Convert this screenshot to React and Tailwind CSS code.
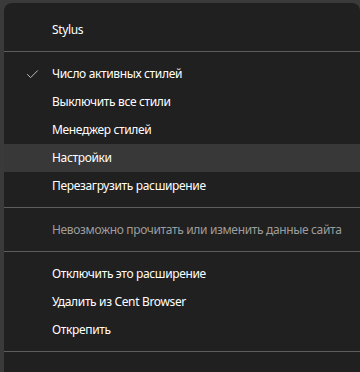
import { Check } from "lucide-react";

const Item = ({ children, active, checked, disabled }) => (
  <div
    className={`flex h-[28px] items-center pl-[48px] text-[12px] tracking-[-0.35px] ${
      active ? "bg-[#383838]" : ""
    } ${disabled ? "text-[#9d9d9d]" : "text-white"}`}
  >
    {checked && (
      <Check className="absolute ml-[-27px] h-[15px] w-[15px] text-[#bdbdbd]" strokeWidth={1.6} />
    )}
    {children}
  </div>
);

const Sep = () => <div className="my-[7px] h-px bg-[#5e5e5e]" />;

export default function App() {
  return (
    <div
      className="h-[372px] w-[360px] overflow-hidden bg-[#3a3a3a] pl-[4px] pt-[3px]"
      style={{ fontFamily: '"Segoe UI", "Noto Sans", "Open Sans", sans-serif' }}
    >
      <div className="h-full rounded-t-[8px] bg-[#202020] pt-[13px]">
        <Item>Stylus</Item>
        <Sep />
        <div className="pt-px">
          <Item checked>Число активных стилей</Item>
          <Item>Выключить все стили</Item>
          <Item>Менеджер стилей</Item>
          <Item active>Настройки</Item>
          <Item>Перезагрузить расширение</Item>
        </div>
        <Sep />
        <div className="pt-px">
          <Item disabled>Невозможно прочитать или изменить данные сайта</Item>
        </div>
        <Sep />
        <div className="pt-px">
          <Item>Отключить это расширение</Item>
          <Item>Удалить из Cent Browser</Item>
          <Item>Открепить</Item>
        </div>
        <Sep />
      </div>
    </div>
  );
}
